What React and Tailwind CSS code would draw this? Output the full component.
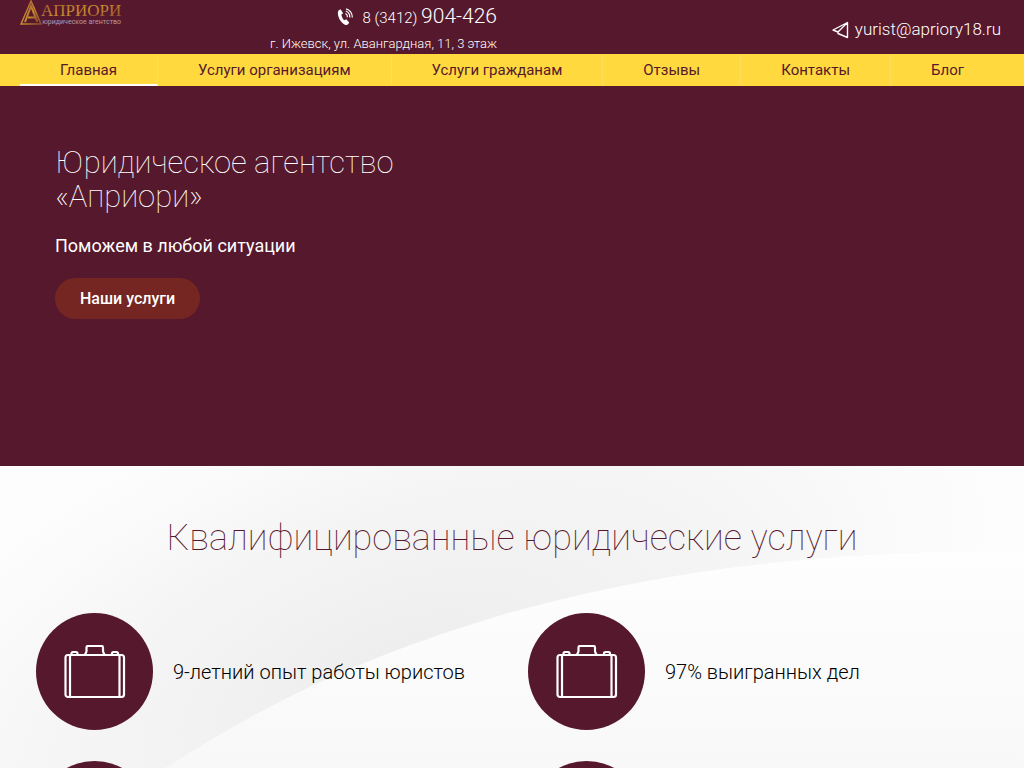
import React from 'react';

const menu = [
  { title: 'Главная', active: true },
  { title: 'Услуги организациям' },
  { title: 'Услуги гражданам' },
  { title: 'Отзывы' },
  { title: 'Контакты' },
  { title: 'Блог' },
];

const advantages = ['9-летний опыт работы юристов', '97% выигранных дел'];

export default function App() {
  return (
    <div className="flex h-screen flex-col overflow-hidden bg-white font-['Roboto',sans-serif]">
      <Header />
      <Menu />
      <Hero />
      <Services />
    </div>
  );
}

function Header() {
  return (
    <header className="grid shrink-0 grid-cols-2 bg-[#56182c] text-white">
      <div className="flex justify-between pr-[15px] pl-5">
        <a href="#" aria-label="Априори"><Logo /></a>
        <div className="text-right font-light">
          <a href="tel:+73412904426" className="flex items-center justify-end gap-2 text-[15px] leading-8">
            <PhoneIcon />
            <span>8 (3412) <span className="text-[21px]">904-426</span></span>
          </a>
          <p className="text-[13px] leading-5">г. Ижевск, ул. Авангардная, 11, 3 этаж</p>
        </div>
      </div>
      <div className="flex items-center justify-end pt-1.5 pr-[23px] font-light">
        <a href="mailto:yurist@apriory18.ru" className="flex items-center gap-1.5 text-[17px]">
          <SendIcon />
          yurist@apriory18.ru
        </a>
      </div>
    </header>
  );
}

function Menu() {
  return (
    <nav className="flex shrink-0 bg-[#ffd93d] px-5">
      {menu.map((item) => (
        <a
          key={item.title}
          href="#"
          className={
            'flex-auto border-r border-b-2 border-r-[#ffde59] px-8 pt-0.5 text-center text-[15px] leading-7 text-[#56182c] last:border-r-0 ' +
            (item.active ? 'border-b-white' : 'border-b-transparent')
          }
        >
          {item.title}
        </a>
      ))}
    </nav>
  );
}

function Hero() {
  return (
    <section className="h-[380px] shrink-0 bg-[#56182c] px-[55px] pt-[60px] text-white">
      <h1 className="max-w-[400px] text-[31px] leading-[34px] font-thin">
        Юридическое агентство «Априори»
      </h1>
      <p className="mt-5 text-lg leading-6">Поможем в любой ситуации</p>
      <button type="button" className="mt-5 rounded-full bg-[#762622] px-[25px] text-base leading-[41px] font-medium">
        Наши услуги
      </button>
    </section>
  );
}

function Services() {
  return (
    <section className="relative flex-1 px-9 pt-[47px]">
      <Waves />
      <div className="relative">
        <h2 className="text-center text-4xl leading-[50px] font-thin text-[#56182c]">
          Квалифицированные юридические услуги
        </h2>
        <ul className="mt-[50px] grid grid-cols-2 gap-x-8 gap-y-[31px] text-xl font-light text-black">
          {advantages.map((text) => (
            <li key={text} className="flex items-center gap-5">
              <CaseIcon />
              {text}
            </li>
          ))}
          {advantages.map((text) => (
            <li key={text + '-next'}><CaseIcon /></li>
          ))}
        </ul>
      </div>
    </section>
  );
}

function Waves() {
  return (
    <svg className="absolute inset-x-0 top-0 aspect-[1024/302] w-full" viewBox="0 0 1024 302" aria-hidden="true">
      <defs>
        <radialGradient id="back" gradientUnits="userSpaceOnUse" cx="0" cy="0" r="1" gradientTransform="translate(400 210) rotate(-20) scale(620 300)">
          <stop offset="0" stopColor="#ededed" />
          <stop offset="0.5" stopColor="#f4f4f4" />
          <stop offset="1" stopColor="#fdfdfd" />
        </radialGradient>
        <linearGradient id="front" x1="0" y1="0" x2="0" y2="1">
          <stop offset="0" stopColor="#fefefe" />
          <stop offset="1" stopColor="#f8f8f8" />
        </linearGradient>
      </defs>
      <rect width="1024" height="302" fill="url(#back)" />
      <path d="M165 302C290 222 390 182 512 146C680 100 840 84 1024 86V302Z" fill="url(#front)" />
    </svg>
  );
}

function Logo() {
  return (
    <svg width="104" height="26" viewBox="0 0 104 26">
      <defs>
        <linearGradient id="gold" x1="0" y1="0" x2="1" y2="1">
          <stop offset="0" stopColor="#9c5a2e" />
          <stop offset="0.5" stopColor="#c98c30" />
          <stop offset="1" stopColor="#8a4a2b" />
        </linearGradient>
      </defs>
      <path d="M11 1L1 24H21Z" fill="none" stroke="url(#gold)" strokeWidth="1.500" />
      <path d="M5 22L11 6L17.500 22M8 17.500H15" fill="none" stroke="url(#gold)" strokeWidth="2" />
      <text x="21" y="16" fontSize="17" fontFamily="Liberation Serif, serif" fill="url(#gold)">АПРИОРИ</text>
      <text x="101" y="24" textAnchor="end" fontSize="7" fontFamily="Roboto, sans-serif" fill="#b79aa3">юридическое агентство</text>
    </svg>
  );
}

function PhoneIcon() {
  return (
    <svg width="17" height="18" viewBox="0 0 17 18" fill="none">
      <path d="M3.500 1.200L1.500 2.600C-0.500 6 2.500 13.500 7.500 16.500C9 17.300 10.300 17.200 11.300 16L12.200 14.600L9.300 11.200L7.200 12.200C5.600 10.800 4.600 8.600 4.400 6.600L6.200 5.300Z" fill="currentColor" />
      <path d="M8.500 5.500C9.800 6.200 10.600 7.600 10.400 9.200M8.800 3C11.300 4 13 6.600 12.800 9.500M9 0.800C12.700 1.800 15.500 5.300 15.300 9.500" stroke="currentColor" strokeWidth="1.200" />
    </svg>
  );
}

function SendIcon() {
  return (
    <svg width="17" height="18" viewBox="0 0 17 18" fill="none" stroke="currentColor" strokeWidth="1.400" strokeLinejoin="round">
      <path d="M1 9L15.500 1.500V16.500L6 12.500V11L1 9ZM15.500 1.500L6 11" />
    </svg>
  );
}

function CaseIcon() {
  return (
    <span className="flex size-[117px] shrink-0 items-center justify-center rounded-full bg-[#56182c]">
      <svg width="62" height="54" viewBox="0 0 62 54" fill="none" stroke="#fff" strokeWidth="2.200">
        <rect x="1.500" y="10" width="58.500" height="42" rx="2.500" />
        <path d="M6 10V52M55.500 10V52" />
        <path d="M7.500 10V8.500Q7.500 7 9 7H12Q13.500 7 13.500 8.500V10M48 10V8.500Q48 7 49.500 7H52.500Q54 7 54 8.500V10M21 10C21 8 22.500 8.500 22.500 6V2.500Q22.500 1 24 1H37.500Q39 1 39 2.500V6C39 8.500 40.500 8 40.500 10" />
      </svg>
    </span>
  );
}
